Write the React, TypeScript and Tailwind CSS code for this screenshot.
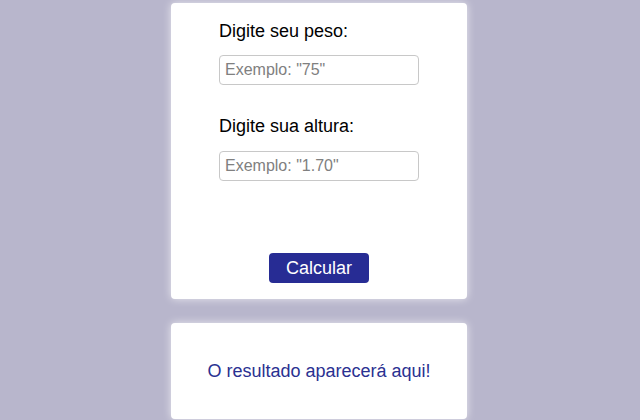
const App = () => {
  return (
    <div className="min-h-screen bg-[#b8b6cc] pt-[3px] pr-[2px] font-['Liberation_Sans',Arial,sans-serif]">
      {/* Form card */}
      <div className="mx-auto flex h-[296px] w-[296px] flex-col items-center rounded-[4px] bg-white shadow-[0_0_8px_rgba(255,255,255,0.7)]">
        <div className="flex w-[200px] flex-col pt-[17px]">
          <label className="text-[18px] leading-[22px] text-black">Digite seu peso:</label>
          <input
            type="text"
            placeholder='Exemplo: "75"'
            className="mt-[13px] h-[30px] w-[200px] rounded-[4px] border border-[#c8c8c8] px-[5px] text-[16px] placeholder:text-[#808080]"
          />
          <label className="mt-[30px] text-[18px] leading-[22px] text-black">Digite sua altura:</label>
          <input
            type="text"
            placeholder='Exemplo: "1.70"'
            className="mt-[14px] h-[30px] w-[200px] rounded-[4px] border border-[#c8c8c8] px-[5px] text-[16px] placeholder:text-[#808080]"
          />
        </div>
        <button className="mt-[72px] h-[30px] w-[100px] rounded-[4px] bg-[#272c94] text-[18px] text-white">
          Calcular
        </button>
      </div>

      {/* Result card */}
      <div className="mx-auto mt-[24px] flex h-[96px] w-[296px] items-center justify-center rounded-[4px] bg-white shadow-[0_0_8px_rgba(255,255,255,0.7)]">
        <p className="text-[18px] text-[#2a3191]">O resultado aparecerá aqui!</p>
      </div>
    </div>
  );
};

export default App;
